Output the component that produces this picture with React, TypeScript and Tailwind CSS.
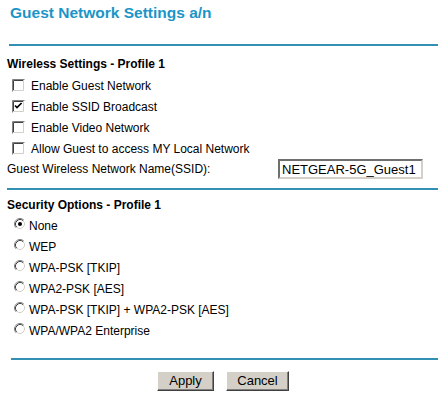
const checkboxes = [
  { label: 'Enable Guest Network', checked: false },
  { label: 'Enable SSID Broadcast', checked: true },
  { label: 'Enable Video Network', checked: false },
  { label: 'Allow Guest to access MY Local Network', checked: false },
]

const securityOptions = [
  'None',
  'WEP',
  'WPA-PSK [TKIP]',
  'WPA2-PSK [AES]',
  'WPA-PSK [TKIP] + WPA2-PSK [AES]',
  'WPA/WPA2 Enterprise',
]

function Checkbox({ checked }: { checked: boolean }) {
  return (
    <svg width="13" height="13" viewBox="0 0 13 13" className="shrink-0">
      <rect x="0" y="0" width="13" height="13" fill="#ffffff" />
      <path d="M0.5 12.5V0.5H12.5" stroke="#808080" fill="none" />
      <path d="M1.5 11.5V1.5H11.5" stroke="#404040" fill="none" />
      <path d="M1 11.5H11.5V1" stroke="#d4d0c8" fill="none" />
      {checked && <path d="M3 5.5L5 7.6L9.6 3" stroke="#000" strokeWidth="1.7" fill="none" />}
    </svg>
  )
}

function Radio({ checked }: { checked: boolean }) {
  return (
    <svg width="12" height="12" viewBox="0 0 12 12" className="shrink-0">
      <circle cx="6" cy="6" r="5" fill="#ffffff" />
      <path d="M2.11 9.89A5.5 5.5 0 0 1 9.89 2.11" stroke="#808080" fill="none" />
      <path d="M9.89 2.11A5.5 5.5 0 0 1 2.11 9.89" stroke="#ffffff" fill="none" />
      <path d="M2.82 9.18A4.5 4.5 0 0 1 9.18 2.82" stroke="#404040" fill="none" />
      <path d="M9.18 2.82A4.5 4.5 0 0 1 2.82 9.18" stroke="#d4d0c8" fill="none" />
      {checked && <circle cx="6" cy="6" r="2" fill="#000" />}
    </svg>
  )
}

function Button({ label, width }: { label: string; width: string }) {
  return (
    <button
      className={`${width} h-[20px] bg-[#d4d0c8] border border-t-white border-l-white border-b-[#404040] border-r-[#404040] shadow-[inset_-1px_-1px_0_#808080] text-[13px] leading-[16px] text-black`}
    >
      {label}
    </button>
  )
}

export default function App() {
  return (
    <div className="w-[440px] h-[397px] bg-white text-black overflow-hidden font-['Liberation_Sans',Arial,sans-serif]">
      {/* Title */}
      <h1 className="ml-[10px] pt-[3px] text-[15.5px] leading-[20px] font-bold text-[#1b95c7]">
        Guest Network Settings a/n
      </h1>
      <div className="mt-[21px] ml-[9px] mr-[2px] h-[2px] bg-[#3290b3]" />

      {/* Wireless settings */}
      <h2 className="mt-[10px] ml-[7px] text-[12px] leading-[16px] font-bold">Wireless Settings - Profile 1</h2>
      <div className="mt-[3px]">
        {checkboxes.map((c) => (
          <div key={c.label} className="h-[21px] flex items-center pl-[12px] text-[12px]">
            <Checkbox checked={c.checked} />
            <span className="ml-[6px]">{c.label}</span>
          </div>
        ))}
        <div className="h-[21px] flex items-start text-[12px]">
          <span className="flex-1 pl-[7px] leading-[21px]">Guest Wireless Network Name(SSID):</span>
          <input
            defaultValue="NETGEAR-5G_Guest1"
            className="w-[145px] h-[20px] mr-[17px] px-[2px] text-[13px] border-2 border-t-[#6f6f6f] border-l-[#6f6f6f] border-b-[#d4d0c8] border-r-[#d4d0c8] outline-none"
          />
        </div>
      </div>
      <div className="mt-[8px] ml-[7px] mr-[2px] h-[2px] bg-[#3290b3]" />

      {/* Security options */}
      <h2 className="mt-[7px] ml-[7px] text-[12px] leading-[16px] font-bold">Security Options - Profile 1</h2>
      <div className="mt-[2px]">
        {securityOptions.map((opt, i) => (
          <div key={opt} className="h-[21px] flex items-center pl-[14px] text-[12px]">
            <span className="-mt-[4px]">
              <Radio checked={i === 0} />
            </span>
            <span className="ml-[3px]">{opt}</span>
          </div>
        ))}
      </div>
      <div className="mt-[17px] ml-[11px] mr-[2px] h-[2px] bg-[#3290b3]" />

      {/* Actions */}
      <div className="mt-[11px] flex justify-center gap-[12px] pl-[6px]">
        <Button label="Apply" width="w-[57px]" />
        <Button label="Cancel" width="w-[63px]" />
      </div>
    </div>
  )
}
